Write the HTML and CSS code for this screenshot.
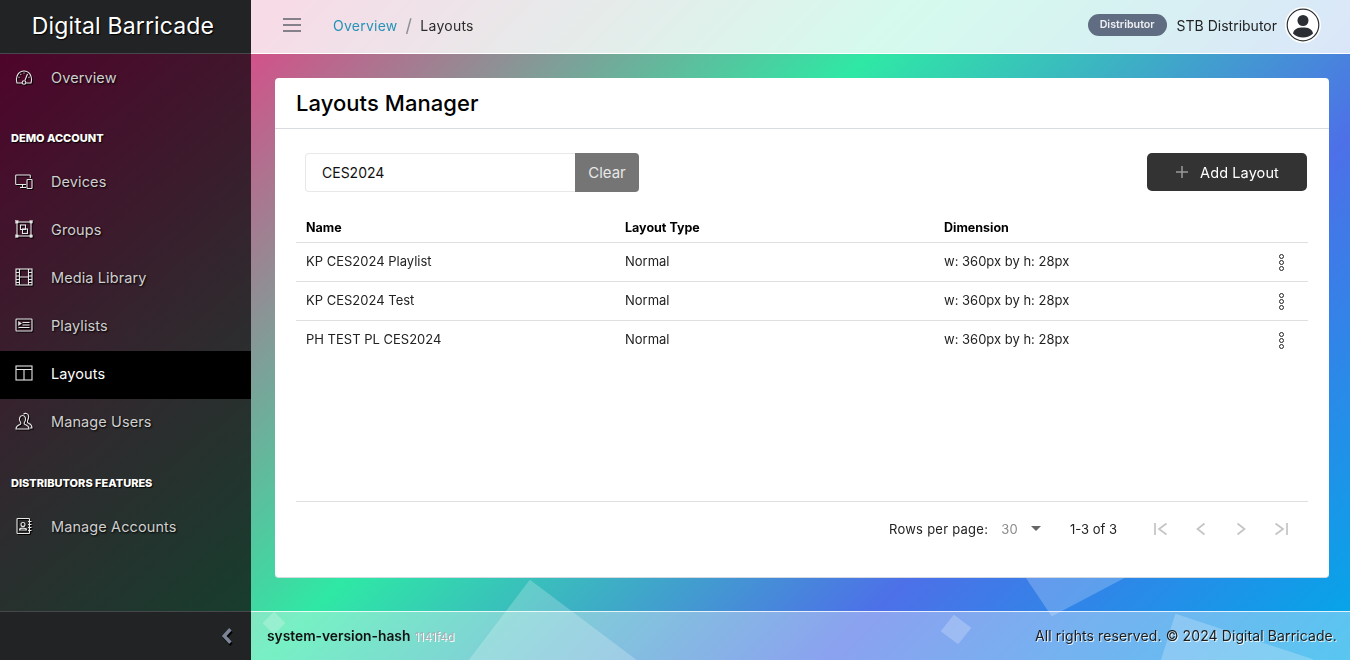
FILE: index.html
```html
<!DOCTYPE html>
<html lang="en">
<head>
  <meta charset="UTF-8" />
  <title>Digital Barricade - Layouts</title>
  <link rel="stylesheet" href="styles.css">
</head>
<body>
  <svg class="decor" viewBox="0 0 1350 660" aria-hidden="true">
    <path d="M530 581 L635 660 L470 660 Z" />
    <path d="M988 520 L1194 540 L1052 615 Z" />
    <path d="M274 613 L284 623 L274 633 L264 623 Z" />
    <path d="M954 616 L970 628 L958 643 L942 631 Z" />
    <path d="M1176 615 L1312 660 L1162 660 Z" />
  </svg>

  <aside class="sidebar">
    <div class="brand">Digital Barricade</div>
    <nav class="menu">
      <a class="menu-item">
        <svg viewBox="0 0 18 18"><path d="M7 15 H2 C0 8 4 3 9 3 S18 8 16 15 H11 M3.500 9 l1 .4 M5.500 5.800 l.7 .8 M9 4.500 v1 M14.500 9 l-1 .4 M12.500 6 l-2.500 6.300" /><circle cx="9" cy="14.500" r="1.800" /></svg>
        Overview
      </a>
      <div class="menu-label">DEMO ACCOUNT</div>
      <a class="menu-item">
        <svg viewBox="0 0 18 18"><path d="M11 12.500 H1.500 a.8 .8 0 0 1 -.8 -.8 V3.800 a.8 .8 0 0 1 .8 -.8 H14.500 a.8 .8 0 0 1 .8 .8 V6 M5 15.500 H11 M7.500 12.500 V15.500" /><rect x="12" y="7.500" width="5" height="9" rx=".7" /></svg>
        Devices
      </a>
      <a class="menu-item">
        <svg viewBox="0 0 18 18"><rect x="2" y="2" width="14" height="14" /><rect x="5.500" y="5" width="5" height="4.500" /><rect x="7.500" y="9" width="5" height="4.500" /><g class="fill"><rect x=".7" y=".7" width="2.400" height="2.400" /><rect x="14.900" y=".7" width="2.400" height="2.400" /><rect x=".7" y="14.900" width="2.400" height="2.400" /><rect x="14.900" y="14.900" width="2.400" height="2.400" /></g></svg>
        Groups
      </a>
      <a class="menu-item">
        <svg viewBox="0 0 18 18"><rect x="1" y="1" width="16" height="16" /><path d="M4.500 1 V17 M13.500 1 V17 M4.500 9 H13.500 M1 4.500 H4.500 M1 8 H4.500 M1 11.500 H4.500 M1 14.500 H4.500 M13.500 4.500 H17 M13.500 8 H17 M13.500 11.500 H17 M13.500 14.500 H17" /></svg>
        Media Library
      </a>
      <a class="menu-item">
        <svg viewBox="0 0 18 18"><rect x="1" y="3" width="16" height="12" rx=".8" /><path d="M7.500 6.500 H14.500 M7.500 9 H14.500 M3.500 11.500 H14.500" /><path class="fill" d="M3.500 5.500 L6.500 7.500 L3.500 9.500 Z" /></svg>
        Playlists
      </a>
      <a class="menu-item active">
        <svg viewBox="0 0 18 18"><rect x="1" y="2" width="16" height="14" /><path d="M1 5.500 H17 M9 5.500 V16" /></svg>
        Layouts
      </a>
      <a class="menu-item">
        <svg viewBox="0 0 18 18"><path d="M1 17 C1 14 3 13.500 5 12.500 C6 12 6 11 5.400 10 C3.600 7.500 4.300 3.500 7.500 3.500 C10.700 3.500 11.400 7.500 9.600 10 C9 11 9 12 10 12.500 C12 13.500 14 14 14 17 Z" /><path d="M8.500 2.300 C9.500 .8 13.500 .8 13.700 4.500 C13.800 6.500 12.800 8 12.400 9 C12.200 10 12.500 10.800 13.500 11.300 C15 12 17 12.500 17 16 H15" /></svg>
        Manage Users
      </a>
      <div class="menu-label second">DISTRIBUTORS FEATURES</div>
      <a class="menu-item">
        <svg viewBox="0 0 18 18"><rect x="2" y="1.500" width="12.500" height="15" rx=".8" /><circle cx="8" cy="7.500" r="2" /><path d="M4.500 13 C4.500 10.500 11.500 10.500 11.500 13 Z M13 4.500 H16.500 M13 7.500 H16.500 M13 10.500 H16.500 M13 13.500 H16.500" /></svg>
        Manage Accounts
      </a>
    </nav>
    <div class="collapse">
      <svg viewBox="0 0 12 16"><path d="M9 2 L3.500 8 L9 14" /></svg>
    </div>
  </aside>

  <div class="page">
    <header class="topbar">
      <svg class="burger" viewBox="0 0 18 14"><path d="M0 1 H18 M0 7 H18 M0 13 H18" /></svg>
      <nav class="crumbs">
        <a>Overview</a>
        <span class="sep">/</span>
        <span>Layouts</span>
      </nav>
      <div class="user">
        <span class="role">Distributor</span>
        <span class="user-name">STB Distributor</span>
        <svg class="avatar" viewBox="0 0 36 36">
          <circle cx="18" cy="18" r="18" fill="#fff" />
          <circle cx="18" cy="18" r="15.800" fill="#fff" stroke="#2b2f33" stroke-width="1.200" />
          <circle cx="18" cy="13.500" r="5.500" fill="#2b2f33" />
          <path d="M8 26.500 C9 21.500 13 20.500 18 20.500 S27 21.500 28 26.500 C25.500 29 22 30.500 18 30.500 S10.500 29 8 26.500 Z" fill="#2b2f33" />
        </svg>
      </div>
    </header>

    <main class="content">
      <section class="card">
        <h1 class="card-title">Layouts Manager</h1>
        <div class="card-body">
          <div class="toolbar">
            <div class="search">
              <div class="search-input">CES2024</div>
              <button class="btn-clear">Clear</button>
            </div>
            <button class="btn-add">
              <svg viewBox="0 0 14 14"><path d="M7 1 V13 M1 7 H13" /></svg>
              Add Layout
            </button>
          </div>

          <table class="grid">
            <thead>
              <tr><th>Name</th><th>Layout Type</th><th>Dimension</th><th></th></tr>
            </thead>
            <tbody>
              <tr>
                <td>KP CES2024 Playlist</td><td>Normal</td><td>w: 360px by h: 28px</td>
                <td class="more"><span class="dots"><i></i><i></i><i></i></span></td>
              </tr>
              <tr>
                <td>KP CES2024 Test</td><td>Normal</td><td>w: 360px by h: 28px</td>
                <td class="more"><span class="dots"><i></i><i></i><i></i></span></td>
              </tr>
              <tr>
                <td>PH TEST PL CES2024</td><td>Normal</td><td>w: 360px by h: 28px</td>
                <td class="more"><span class="dots"><i></i><i></i><i></i></span></td>
              </tr>
            </tbody>
          </table>

          <div class="pager">
            <span class="rows-label">Rows per page:</span>
            <span class="rows-value">30</span>
            <span class="rows-caret"></span>
            <span class="range">1-3 of 3</span>
            <div class="pager-btns">
              <svg viewBox="0 0 16 16"><path d="M2 2 V14 M13.500 2.500 L6 8 L13.500 13.500" /></svg>
              <svg viewBox="0 0 16 16"><path d="M11.500 2.500 L4.500 8 L11.500 13.500" /></svg>
              <svg viewBox="0 0 16 16"><path d="M4.500 2.500 L11.500 8 L4.500 13.500" /></svg>
              <svg viewBox="0 0 16 16"><path d="M14 2 V14 M2.500 2.500 L10 8 L2.500 13.500" /></svg>
            </div>
          </div>
        </div>
      </section>
    </main>

    <footer class="footer">
      <div class="hash"><b>system-version-hash</b> <span>1141f4d</span></div>
      <div class="rights">All rights reserved. © 2024 Digital Barricade.</div>
    </footer>
  </div>
</body>
</html>
```

FILE: styles.css
```css
html, body {
  margin: 0;
  padding: 0;
  height: 100%;
  overflow: hidden;
}

body {
  display: flex;
  width: 1350px;
  height: 660px;
  font-family: "Inter", "Liberation Sans", sans-serif;
  font-size: 14px;
  color: #111;
  background: linear-gradient(135deg, #d84c88 14%, #2fe8a5 46%, #4d70e8 74%, #00a9e8 100%);
}

.decor {
  position: fixed;
  top: 0;
  left: 0;
  width: 1350px;
  height: 660px;
  opacity: 0.22;
}

.decor path {
  fill: #fff;
  stroke: #fff;
  stroke-width: 2;
  stroke-linejoin: round;
}

/* sidebar */
.sidebar {
  position: relative;
  width: 251px;
  flex: none;
  display: flex;
  flex-direction: column;
  background: linear-gradient(140deg, #52002a 0%, #2f2a2e 58%, #14402e 100%);
}

.brand {
  height: 53px;
  line-height: 53px;
  padding-right: 5px;
  text-align: center;
  font-size: 23px;
  letter-spacing: 0.15px;
  color: #fff;
  background: #212325;
  border-bottom: 1px solid #45474a;
  text-shadow: 1px 1px 1px #000;
}

.menu {
  flex: 1;
  padding-top: 1px;
}

.menu-item {
  display: flex;
  align-items: center;
  gap: 18px;
  height: 48px;
  box-sizing: border-box;
  padding: 0 0 4px 15px;
  color: #cfcfcf;
  font-size: 14.500px;
  letter-spacing: 0.1px;
  text-shadow: 1px 1px 2px #000;
}

.menu-item svg {
  width: 18px;
  height: 18px;
  flex: none;
  fill: none;
  stroke: #e6e6e6;
  stroke-width: 1.100;
  filter: drop-shadow(1px 1px 0 #000);
}

.menu-item svg .fill {
  fill: #e6e6e6;
  stroke-width: 0.500;
}

.menu-item.active {
  background: #000;
  color: #fff;
}

.menu-label {
  height: 56px;
  padding: 27px 0 0 11px;
  box-sizing: border-box;
  font-size: 11px;
  line-height: 16px;
  font-weight: 800;
  color: #fff;
  text-shadow: 1px 1px 1px #000;
}

.menu-label.second {
  height: 57px;
  padding-top: 28px;
}

.collapse {
  height: 48px;
  display: flex;
  align-items: center;
  justify-content: flex-end;
  padding-right: 17px;
  background: #212325;
  border-top: 1px solid #45474a;
}

.collapse svg {
  width: 14px;
  height: 18px;
  fill: none;
  stroke: #7c8596;
  stroke-width: 3;
  filter: drop-shadow(1px 2px 0 #000);
}

/* right side */
.page {
  position: relative;
  flex: 1;
  min-width: 0;
  display: flex;
  flex-direction: column;
}

.topbar {
  height: 54px;
  flex: none;
  box-sizing: border-box;
  display: flex;
  align-items: center;
  padding: 0 29px 3px 32px;
  background: rgba(255, 255, 255, 0.8);
  border-bottom: 1px solid #fff;
}

.burger {
  width: 18px;
  height: 14px;
  fill: none;
  stroke: #85808a;
  stroke-width: 2;
}

.crumbs {
  display: flex;
  align-items: center;
  margin-left: 32px;
  font-size: 14px;
  letter-spacing: 0.25px;
  color: #2b2b2b;
}

.crumbs a {
  color: #2593b8;
}

.sep {
  margin: 0 8px;
  color: #8a8f96;
  font-size: 18px;
}

.user {
  display: flex;
  align-items: center;
  margin-left: auto;
}

.role {
  height: 22px;
  line-height: 22px;
  padding: 0 12px;
  border-radius: 11px;
  background: #5f6c82;
  color: #eef0f3;
  font-size: 10.700px;
  font-weight: 600;
}

.user-name {
  margin: 0 8px 0 10px;
  font-size: 14px;
  color: #222;
}

.avatar {
  width: 36px;
  height: 36px;
}

.content {
  flex: 1;
  min-height: 0;
  padding: 24px 21px 33px 24px;
}

.card {
  height: 100%;
  display: flex;
  flex-direction: column;
  box-sizing: border-box;
  background: #fff;
  border-radius: 4px;
  border-bottom: 1px solid #d5d9e0;
}

.card-title {
  margin: 0;
  height: 50px;
  line-height: 50px;
  padding-left: 21px;
  font-size: 22px;
  font-weight: 500;
  letter-spacing: 0.05px;
  color: #000;
  border-bottom: 1px solid #d8dbe0;
}

.card-body {
  flex: 1;
  display: flex;
  flex-direction: column;
  padding: 24px 21px 0;
}

.toolbar {
  display: flex;
  justify-content: space-between;
  align-items: flex-start;
  height: 38px;
  padding: 0 1px 0 9px;
  margin-bottom: 21px;
}

.search {
  display: flex;
  height: 39px;
}

.search-input {
  width: 270px;
  box-sizing: border-box;
  line-height: 37px;
  padding-left: 16px;
  border: 1px solid #e6e8ea;
  border-right: none;
  border-radius: 4px 0 0 4px;
  font-size: 14px;
  color: #111;
}

.btn-clear {
  width: 64px;
  border: none;
  border-radius: 0 4px 4px 0;
  background: #757575;
  color: #e8e8e8;
  font: inherit;
  font-size: 15px;
}

.btn-add {
  width: 160px;
  height: 38px;
  display: flex;
  align-items: center;
  justify-content: center;
  gap: 11px;
  border: none;
  border-radius: 5px;
  background: #333;
  color: #fff;
  font: inherit;
  font-size: 14.500px;
  letter-spacing: 0.1px;
}

.btn-add svg {
  width: 14px;
  height: 14px;
  fill: none;
  stroke: #9a9a9a;
  stroke-width: 1.500;
}

.grid {
  width: 1012px;
  border-collapse: collapse;
  table-layout: fixed;
  font-size: 13px;
}

.grid th {
  width: 319px;
  box-sizing: border-box;
  height: 30px;
  padding: 2px 10px 0;
  text-align: left;
  font-weight: 700;
  font-size: 12.500px;
  color: #000;
  border-bottom: 1px solid #e0e0e0;
}

.grid th:last-child {
  width: 55px;
}

.grid td {
  height: 36px;
  padding: 0 10px 2px;
  color: #222;
  border-bottom: 1px solid #e0e0e0;
}

.grid tr:last-child td {
  border-bottom: none;
}

.more {
  text-align: center;
}

.grid td.more {
  padding: 1px 9px 0 11px;
}

.dots {
  display: inline-flex;
  flex-direction: column;
  gap: 1px;
  vertical-align: middle;
}

.dots i {
  width: 3px;
  height: 3px;
  border: 1px solid #222;
  border-radius: 50%;
}

.pager {
  margin-top: auto;
  height: 76px;
  display: flex;
  align-items: center;
  padding-bottom: 22px;
  box-sizing: border-box;
  border-top: 1px solid #e0e0e0;
  font-size: 13px;
  letter-spacing: 0.25px;
  color: #222;
}

.rows-label {
  margin-left: 593px;
}

.rows-value {
  margin-left: 13px;
  color: #8a8a8a;
}

.rows-caret {
  margin-left: 13px;
  border-left: 5.500px solid transparent;
  border-right: 5.500px solid transparent;
  border-top: 5px solid #666;
}

.range {
  margin-left: 29px;
  letter-spacing: 0;
}

.pager-btns {
  display: flex;
  gap: 24px;
  margin-left: 36px;
}

.pager-btns svg {
  width: 16px;
  height: 16px;
  fill: none;
  stroke: #c4c4c4;
  stroke-width: 1.700;
}

.footer {
  height: 49px;
  flex: none;
  box-sizing: border-box;
  display: flex;
  align-items: center;
  justify-content: space-between;
  padding: 0 13px 2px 16px;
  background: rgba(255, 255, 255, 0.35);
  border-top: 1px solid rgba(255, 255, 255, 0.8);
  font-size: 14px;
  letter-spacing: 0.1px;
}

.hash b {
  font-size: 13.800px;
  letter-spacing: 0;
  font-weight: 600;
  color: #111;
}

.hash span {
  font-size: 11.500px;
  letter-spacing: 0.1px;
  color: #a9aeb5;
  text-shadow: 1px 1px 0 #fff;
}

.rights {
  color: #1c1c1c;
  text-shadow: 1px 1px 0 rgba(255, 255, 255, 0.8);
}
```
